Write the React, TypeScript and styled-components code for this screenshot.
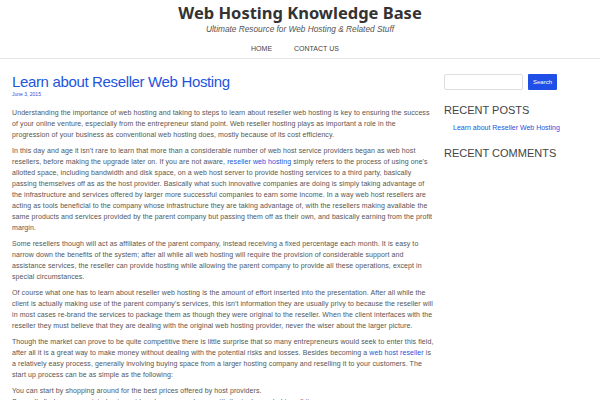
import React from 'react'
import styled, { createGlobalStyle } from 'styled-components'

const GlobalStyle = createGlobalStyle`
  html, body {
    margin: 0;
    padding: 0;
    background: #fff;
  }
  body {
    font-family: "Liberation Sans", Arial, sans-serif;
    color: #555;
  }
`

const Page = styled.div`
  width: 600px;
  height: 400px;
  overflow: hidden;
`
const Header = styled.header`
  display: flex;
  flex-direction: column;
  align-items: center;
  padding-top: 2px;
  border-bottom: 1px solid #e6e6e6;
`
const SiteTitle = styled.h1`
  margin: 0;
  font-family: "Noto Sans", "Open Sans", sans-serif;
  font-weight: bold;
  font-size: 16.5px;
  line-height: 22px;
  color: #333;
`
const Tagline = styled.div`
  font-size: 8.3px;
  font-style: italic;
  color: #555;
  line-height: 10px;
`
const Nav = styled.nav`
  display: flex;
  gap: 22px;
  padding: 11px 10px 6px 0;
`
const NavItem = styled.a`
  font-size: 7px;
  text-transform: uppercase;
  color: #444;
  text-decoration: none;
`
const Body = styled.div`
  display: flex;
  padding: 14px 8px 0 12px;
  gap: 10px;
`
const Main = styled.main`
  width: 422px;
  flex-shrink: 0;
`
const PostTitle = styled.h2`
  margin: 0;
  font-weight: normal;
  font-size: 15px;
  letter-spacing: -0.35px;
  line-height: 18px;
  color: #2255dd;
`
const PostDate = styled.div`
  font-size: 5px;
  color: #2255dd;
  margin-bottom: 10px;
`
const Para = styled.p`
  margin: 0 0 5px;
  font-size: 7px;
  letter-spacing: 0.09px;
  line-height: 11px;
  color: #555;
`
const Link = styled.a`
  color: #2255dd;
  text-decoration: none;
`
const Sidebar = styled.aside`
  flex: 1;
  padding-top: 1px;
`
const SearchRow = styled.div`
  display: flex;
  gap: 5px;
  margin-bottom: 14px;
`
const SearchInput = styled.input`
  box-sizing: border-box;
  width: 79px;
  height: 16px;
  border: 1px solid #ddd;
  border-radius: 2px;
  padding: 0;
`
const SearchButton = styled.button`
  height: 16px;
  width: 29px;
  padding: 0;
  border: none;
  border-radius: 1px;
  background: #1f4fe6;
  color: #fff;
  font-size: 6px;
  font-family: "Liberation Sans", Arial, sans-serif;
`
const WidgetTitle = styled.h3`
  margin: 0 0 8px;
  font-weight: normal;
  font-size: 11px;
  text-transform: uppercase;
  color: #444;
`
const WidgetList = styled.ul`
  margin: 0 0 16px;
  padding-left: 9px;
  list-style: none;
  font-size: 7px;
`

const paragraphs = (): React.ReactNode[] => [
  <>Understanding the importance of web hosting and taking to steps to learn about reseller web hosting is key to ensuring the success of your online venture, especially from the entrepreneur stand point. Web reseller hosting plays as important a role in the progression of your business as conventional web hosting does, mostly because of its cost efficiency.</>,
  <>In this day and age it isn't rare to learn that more than a considerable number of web host service providers began as web host resellers, before making the upgrade later on. If you are not aware, <Link href="#">reseller web hosting</Link> simply refers to the process of using one's allotted space, including bandwidth and disk space, on a web host server to provide hosting services to a third party, basically passing themselves off as as the host provider. Basically what such innovative companies are doing is simply taking advantage of the infrastructure and services offered by larger more successful companies to earn some income. In a way web host resellers are acting as tools beneficial to the company whose infrastructure they are taking advantage of, with the resellers making available the same products and services provided by the parent company but passing them off as their own, and basically earning from the profit margin.</>,
  <>Some resellers though will act as affiliates of the parent company, instead receiving a fixed percentage each month. It is easy to narrow down the benefits of the system; after all while all web hosting will require the provision of considerable support and assistance services, the reseller can provide hosting while allowing the parent company to provide all these operations, except in special circumstances.</>,
  <>Of course what one has to learn about reseller web hosting is the amount of effort inserted into the presentation. After all while the client is actually making use of the parent company's services, this isn't information they are usually privy to because the reseller will in most cases re-brand the services to package them as though they were original to the reseller. When the client interfaces with the reseller they must believe that they are dealing with the original web hosting provider, never the wiser about the larger picture.</>,
  <>Though the market can prove to be quite competitive there is little surprise that so many entrepreneurs would seek to enter this field, after all it is a great way to make money without dealing with the potential risks and losses. Besides becoming a <Link href="#">web host reseller</Link> is a relatively easy process, generally involving buying space from a larger hosting company and reselling it to your customers. The start up process can be as simple as the following:</>,
  <>You can start by shopping around for the best prices offered by host providers.<br />Secondly find an appropriate host provider who can supply you with the tools needed to sell it.</>,
]

export default function App() {
  return (
    <Page>
      <GlobalStyle />
      <Header>
        <SiteTitle>Web Hosting Knowledge Base</SiteTitle>
        <Tagline>Ultimate Resource for Web Hosting &amp; Related Stuff</Tagline>
        <Nav>
          <NavItem href="#">Home</NavItem>
          <NavItem href="#">Contact Us</NavItem>
        </Nav>
      </Header>
      <Body>
        <Main>
          <PostTitle>Learn about Reseller Web Hosting</PostTitle>
          <PostDate>June 3, 2015</PostDate>
          {paragraphs().map((p, i) => (
            <Para key={i}>{p}</Para>
          ))}
        </Main>
        <Sidebar>
          <SearchRow>
            <SearchInput type="text" />
            <SearchButton>Search</SearchButton>
          </SearchRow>
          <WidgetTitle>Recent Posts</WidgetTitle>
          <WidgetList>
            <li><Link href="#">Learn about Reseller Web Hosting</Link></li>
          </WidgetList>
          <WidgetTitle>Recent Comments</WidgetTitle>
        </Sidebar>
      </Body>
    </Page>
  )
}
